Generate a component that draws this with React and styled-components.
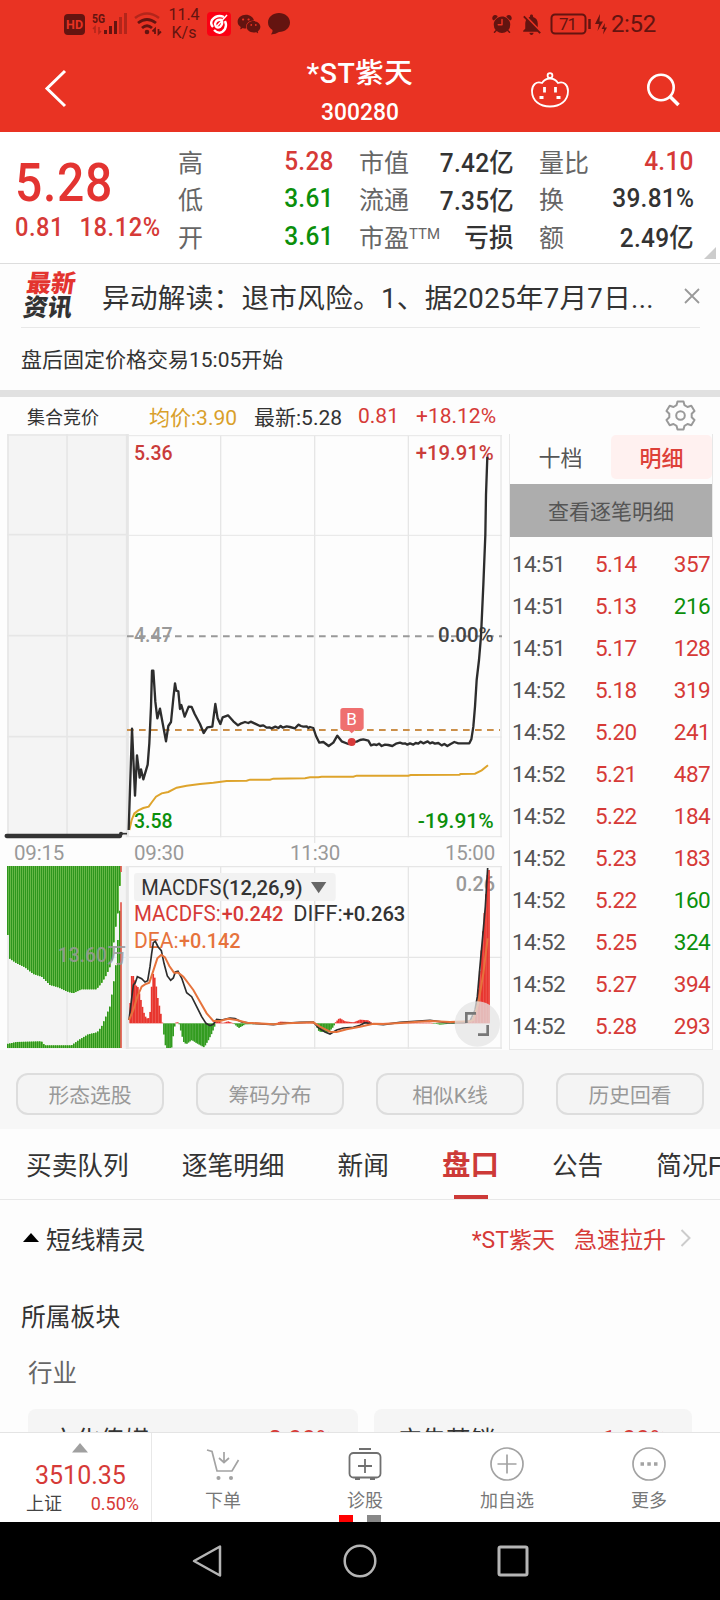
import styled, { createGlobalStyle } from 'styled-components';
import { AiFillWechat } from 'react-icons/ai';
import { IoAlarm } from 'react-icons/io5';
import { MdNotificationsOff } from 'react-icons/md';

const RED = '#d63a37';
const GREEN = '#0b8f0b';
const maroon = '#641410';

const GlobalStyle = createGlobalStyle`
  * {
    box-sizing: border-box;
  }

  body {
    margin: 0;
    background: #fdfdfd;
    color: #333;
    font-family: Roboto, "Noto Sans CJK SC", sans-serif;
  }

  svg {
    display: block;
    flex-shrink: 0;
  }
`;

const Screen = styled.main`
  width: 720px;
  height: 1600px;
  overflow: hidden;
  display: flex;
  flex-direction: column;

  > * {
    flex-shrink: 0;
  }
`;

/* ---------- header ---------- */

const Header = styled.header`
  height: 132px;
  background: #e93323;
  color: #fff;
`;

const StatusBar = styled.div`
  height: 48px;
  padding: 0 64px;
  display: flex;
  align-items: center;
  color: ${maroon};
`;

const Speed = styled.div`
  width: 36px;
  margin: 0 5px 0 4px;
  font-size: 16px;
  line-height: 18px;
  text-align: center;
`;

const StatusRight = styled.div`
  margin-left: auto;
  display: flex;
  align-items: center;
`;

const Clock = styled.span`
  margin-left: 3px;
  font-size: 24px;
  letter-spacing: -0.3px;
`;

const TitleBar = styled.div`
  height: 84px;
  display: grid;
  grid-template-columns: 1fr 160px 1fr;
`;

const BackSlot = styled.div`
  padding: 21px 0 0 44px;
`;

const Title = styled.h1`
  margin: 7px 0 0;
  font-size: 28.5px;
  line-height: 38px;
  font-weight: 500;
  letter-spacing: 0.5px;
  text-align: center;

  small {
    display: block;
    margin-top: 4px;
    font-size: 24px;
    line-height: 30px;
    letter-spacing: 0;
    transform: scaleX(0.95);
  }
`;

const HeaderActions = styled.div`
  display: flex;
  justify-content: space-between;
  padding: 23px 40px 0 90px;
`;

/* ---------- quote ---------- */

const Quote = styled.section`
  position: relative;
  height: 132px;
  padding: 10px 25px 0 15px;
  display: flex;
  background: #fff;
  border-bottom: 1px solid #ddd;
`;

const PriceBlock = styled.div`
  width: 163px;
  color: ${RED};
`;

const Price = styled.div`
  margin-top: 10px;
  font-size: 54px;
  line-height: 61px;
  font-weight: 500;
  letter-spacing: 0.8px;
  color: #e33431;
  transform: scaleX(0.89);
  transform-origin: left;
`;

const Change = styled.div`
  display: flex;
  gap: 17px;
  font-size: 26px;
  line-height: 29px;
  font-weight: 500;
  letter-spacing: 0.6px;
  white-space: nowrap;
  transform: scaleX(0.91);
  transform-origin: left;
`;

const Stats = styled.dl`
  margin: 0;
  flex: 1;
  display: grid;
  grid-template-columns: 156px 155px 155px;
  column-gap: 25px;
  grid-auto-rows: 37.5px;
`;

const Stat = styled.div`
  display: flex;
  justify-content: space-between;
  align-items: center;

  dt {
    font-size: 25px;
    color: #666;
  }

  sup {
    font-size: 15px;
    line-height: 1;
    vertical-align: 8px;
  }

  dd {
    margin: 0;
    font-size: 26px;
    font-weight: 500;
    letter-spacing: 0.3px;
    color: ${(p) => p.$color || '#333'};
    transform: scaleX(0.94);
    transform-origin: right;
  }
`;

const Corner = styled.i`
  position: absolute;
  right: 4px;
  bottom: 4px;
  border-left: 12px solid transparent;
  border-bottom: 12px solid #ccc;
`;

/* ---------- news ---------- */

const News = styled.section`
  height: 64px;
  margin: 0 20px 0 21px;
  display: flex;
  align-items: center;
  border-bottom: 1px solid #e8e8e8;
`;

const NewsLogo = styled.div`
  width: 54px;
  margin-left: 4px;
  margin-right: 23px;
  font-size: 24.5px;
  line-height: 24px;
  font-weight: 900;
  transform: skewX(-8deg);

  b {
    display: block;
    font-weight: 900;
    color: #e3342f;
  }
`;

const Headline = styled.p`
  flex: 1;
  margin: 0;
  font-size: 27.6px;
  letter-spacing: 0.3px;
  white-space: nowrap;
`;

const Notice = styled.p`
  height: 69px;
  margin: 0;
  padding: 0 21px;
  line-height: 64px;
  font-size: 21px;
  border-bottom: 7px solid #e1e1e1;
`;

/* ---------- chart ---------- */

const ChartHead = styled.div`
  height: 37px;
  padding: 0 24px 0 27px;
  display: flex;
  align-items: center;
  font-size: 21px;
  color: ${RED};
`;

const Auction = styled.span`
  width: 122px;
  font-size: 18px;
  color: #333;
`;

const HeadValue = styled.span`
  width: ${(p) => p.$w}px;
  color: ${(p) => p.$color};
  white-space: nowrap;
`;

const GearSlot = styled.span`
  margin-left: auto;
`;

const Board = styled.section`
  height: 616px;
  display: flex;
  background: #fdfdfd;
`;

const Charts = styled.div`
  width: 509px;
`;

const TimeAxis = styled.div`
  width: 509px;
  height: 23px;
  padding: 0 14px 0 14px;
  display: grid;
  grid-template-columns: 120px 156px 1fr auto;
  font-size: 20.5px;
  letter-spacing: -0.2px;
  line-height: 21px;
  color: #999;
`;

const Ticks = styled.div`
  width: 204px;
  border: 1px solid #e8e8e8;
  border-top: 0;
`;

const TickTabs = styled.div`
  height: 50px;
  padding-top: 1px;
  display: grid;
  grid-template-columns: 1fr 1fr;
`;

const TickTab = styled.div`
  height: 44px;
  line-height: 47px;
  text-align: center;
  font-size: 22px;
  border-radius: 5px;
  font-weight: ${(p) => (p.$active ? 500 : 400)};
  color: ${(p) => (p.$active ? '#dd4038' : '#555')};
  background: ${(p) => (p.$active ? '#fff1f0' : 'transparent')};
`;

const DetailBar = styled.div`
  height: 53px;
  margin-bottom: 6px;
  line-height: 56px;
  text-align: center;
  font-size: 21px;
  color: #555;
  background: #adadad;
`;

const TickRow = styled.div`
  height: 42px;
  padding: 0 2px 0 2px;
  display: grid;
  grid-template-columns: 83px 1fr auto;
  align-items: center;
  font-size: 22.5px;
  letter-spacing: -0.6px;
  color: ${RED};

  span:first-child {
    color: #555;
  }

  span:last-child {
    color: ${(p) => (p.$sell ? GREEN : RED)};
  }
`;

/* ---------- lower part ---------- */

const Tools = styled.div`
  height: 79px;
  padding: 23px 16px 0;
  display: flex;
  justify-content: space-between;
  background: #f7f7f7;
`;

const ToolButton = styled.button`
  width: 148px;
  height: 42px;
  padding: 0;
  border: 2px solid #ddd;
  border-radius: 12px;
  background: #f4f4f4;
  color: #999;
  font: inherit;
  font-size: 20.8px;
`;

const Tabs = styled.nav`
  height: 71px;
  padding-left: 26px;
  display: flex;
  gap: 53px;
  border-bottom: 1px solid #e8e8e8;
  white-space: nowrap;
  overflow: hidden;
`;

const Tab = styled.a`
  position: relative;
  line-height: ${(p) => (p.$active ? 74 : 75)}px;
  font-size: ${(p) => (p.$active ? 28.5 : 25.7)}px;
  font-weight: ${(p) => (p.$active ? 700 : 400)};
  color: ${(p) => (p.$active ? '#cd3a38' : '#333')};

  &::after {
    content: '';
    display: ${(p) => (p.$active ? 'block' : 'none')};
    position: absolute;
    left: calc(50% - 16px);
    bottom: 0;
    width: 34px;
    height: 4px;
    background: #cd3a38;
  }
`;

const Alert = styled.div`
  height: 78px;
  padding: 0 28px 2px 23px;
  display: flex;
  align-items: center;
  gap: 7px;
  font-size: 24.8px;
`;

const AlertLink = styled.span`
  margin-left: auto;
  display: flex;
  align-items: center;
  gap: 19px;
  font-size: 23px;
  color: ${RED};

  svg {
    margin-left: -5px;
  }
`;

const SectionTitle = styled.h2`
  height: 78px;
  margin: 0;
  padding-left: 21px;
  line-height: 80px;
  font-size: 24.8px;
  font-weight: 400;
`;

const GroupTitle = styled.h3`
  height: 53px;
  margin: 0;
  padding-left: 28px;
  line-height: 36px;
  font-size: 24.5px;
  font-weight: 400;
  color: #666;
`;

const Cards = styled.div`
  height: 23px;
  overflow: hidden;
  padding: 0 28px;
  display: grid;
  grid-template-columns: 330px 318px;
  gap: 16px;
`;

const Card = styled.div`
  height: 80px;
  padding: 15px 24px 0 23px;
  display: flex;
  justify-content: space-between;
  background: #f5f5f5;
  border-radius: 8px;
  font-size: 24.5px;
  line-height: 34px;

  span {
    margin-top: -2px;
    color: ${RED};
  }
`;

const BottomBar = styled.footer`
  height: 90px;
  display: flex;
  background: #fff;
  border-top: 1px solid #e4e4e4;
`;

const Index = styled.div`
  width: 152px;
  padding: 10px 12px 0 26px;
  border-right: 1px solid #e8e8e8;
  color: ${RED};

  svg {
    margin-left: 46px;
  }
`;

const IndexValue = styled.div`
  margin: 6px 0 0 9px;
  font-size: 25px;
  line-height: 33px;
`;

const IndexChange = styled.div`
  display: flex;
  justify-content: space-between;
  font-size: 18px;
  line-height: 24px;

  b {
    color: #444;
    font-weight: 400;
  }
`;

const Action = styled.div`
  position: relative;
  flex: 1;
  padding-top: 14px;
  display: flex;
  flex-direction: column;
  align-items: center;
  font-size: 18px;
  line-height: 28px;
  color: #777;

  svg {
    margin-bottom: 6px;
  }
`;

const PagerDots = styled.span`
  position: absolute;
  bottom: 0;
  left: 45px;
  display: flex;
  gap: 14px;

  i {
    width: 14px;
    height: 7px;
    background: #888;
  }

  i:first-child {
    background: #f00;
  }
`;

const SystemNav = styled.div`
  height: 78px;
  padding-right: 1px;
  background: #000;
  display: flex;
  justify-content: center;
  align-items: center;
  gap: 120px;
`;

/* ---------- data ---------- */

const stats = [
  ['高', '5.28', RED],
  ['市值', '7.42亿'],
  ['量比', '4.10', RED],
  ['低', '3.61', GREEN],
  ['流通', '7.35亿'],
  ['换', '39.81%'],
  ['开', '3.61', GREEN],
  ['市盈', '亏损'],
  ['额', '2.49亿'],
];

const ticks = [
  ['14:51', '5.14', 357],
  ['14:51', '5.13', 216, true],
  ['14:51', '5.17', 128],
  ['14:52', '5.18', 319],
  ['14:52', '5.20', 241],
  ['14:52', '5.21', 487],
  ['14:52', '5.22', 184],
  ['14:52', '5.23', 183],
  ['14:52', '5.22', 160, true],
  ['14:52', '5.25', 324, true],
  ['14:52', '5.27', 394],
  ['14:52', '5.28', 293],
];

const tools = ['形态选股', '筹码分布', '相似K线', '历史回看'];
const tabs = ['买卖队列', '逐笔明细', '新闻', '盘口', '公告', '简况F10'];

const priceLine =
  '386,600 396,296 405,497 411,376 419,443 423,418 430,448 443,404 448,340 453,230 456,122 460,122 466,215 472,265 480,236 488,280 498,334 505,288 513,276 520,205 525,160 529,182 535,184 540,237 544,225 554,260 566,230 575,231 584,252 600,282 611,309 622,292 637,290 646,222 653,265 661,282 668,262 684,256 700,274 714,286 724,280 735,276 745,279 752,275 765,281 780,288 790,286 800,293 808,292 815,295 826,290 835,294 842,288 848,293 860,289 870,291 885,295 895,284 903,288 910,290 920,289 925,294 930,291 940,294 948,318 958,338 970,336 986,348 1000,338 1012,317 1025,334 1045,342 1055,337 1070,335 1080,330 1090,328 1105,332 1113,346 1122,343 1130,345 1137,341 1145,348 1155,344 1165,345 1177,348 1188,341 1200,338 1208,341 1215,340 1222,344 1230,340 1240,344 1247,339 1255,341 1262,335 1270,340 1283,334 1290,340 1297,337 1305,341 1315,339 1325,346 1333,342 1342,348 1352,342 1363,336 1375,340 1408,340 1414,328 1420,290 1425,230 1430,150 1437,90 1443,19 1450,-135 1456,-285 1458,-405 1462,-520';

const averageLine =
  '388,600 395,570 403,550 415,541 430,534 446,530 456,516 468,500 485,490 505,486 530,473 560,467 600,462 640,458 680,453 740,452 750,449 810,449 820,446 915,445 930,442 955,442 965,440 1060,440 1070,437 1225,437 1232,435 1378,434 1382,432 1425,431 1445,421 1464,406';

const diffLine =
  '387,510 392,470 400,405 406,398 412,380 425,386 435,396 443,392 450,350 455,310 460,278 466,274 474,290 484,302 492,340 502,378 512,391 520,384 526,366 534,364 545,384 560,428 575,440 590,470 605,500 618,520 630,527 640,523 650,508 665,510 690,504 705,506 725,516 760,520 820,524 850,520 900,517 940,516 955,533 975,546 990,552 1010,540 1030,534 1060,532 1080,526 1095,518 1120,522 1150,524 1200,517 1290,511 1340,518 1395,518 1410,513 1425,480 1432,440 1438,370 1448,260 1456,170 1463,54';

const deaLine =
  '387,510 400,480 412,440 425,410 435,403 448,398 460,362 472,325 484,314 495,322 508,348 522,368 535,368 550,380 580,420 600,455 620,490 640,513 660,513 685,506 710,510 740,518 820,523 860,520 940,517 960,530 990,545 1010,546 1040,538 1080,530 1120,521 1150,522 1200,519 1290,513 1350,516 1410,514 1420,510 1435,460 1450,370 1463,265';

const auctionTop = [[22, 220], [28, 325], [50, 340], [75, 352], [100, 372], [125, 380], [150, 405], [175, 412], [200, 424], [220, 430], [245, 418], [290, 418], [305, 400], [320, 375], [335, 340], [345, 250], [357, 170], [362, 66]];
const auctionBottom = [[22, 582], [50, 576], [125, 574], [135, 586], [215, 586], [240, 568], [265, 553], [292, 547], [305, 530], [318, 500], [330, 470], [340, 410], [350, 330], [358, 210], [362, 155]];
const histogram = [[387, 520], [394, 378], [402, 378], [406, 407], [412, 407], [420, 440], [430, 485], [438, 505], [445, 505], [450, 485], [455, 400], [460, 365], [467, 400], [472, 440], [480, 480], [487, 520], [492, 560], [497, 594], [514, 594], [520, 550], [525, 520], [531, 515], [537, 522], [550, 575], [558, 583], [575, 570], [590, 580], [612, 592], [625, 570], [635, 550], [643, 530], [646, 512], [668, 519], [684, 514], [700, 520], [716, 534], [735, 523], [825, 521], [840, 515], [930, 518], [945, 521], [957, 545], [985, 547], [1000, 530], [1006, 517], [1018, 504], [1035, 514], [1060, 517], [1080, 509], [1105, 511], [1115, 519], [1290, 518], [1320, 524], [1350, 521], [1405, 518], [1420, 500], [1430, 460], [1436, 400], [1445, 280], [1455, 160], [1463, 60]];

function valueAt(points, x) {
  const i = points.findIndex((p) => p[0] >= x);
  if (i <= 0) return points[i === 0 ? 0 : points.length - 1][1];
  const [x0, y0] = points[i - 1];
  const [x1, y1] = points[i];
  return y0 + ((y1 - y0) * (x - x0)) / (x1 - x0);
}

function range(start, end, step) {
  const out = [];
  for (let x = start; x < end; x += step) out.push(x);
  return out;
}

const ChartText = styled.text`
  font-family: Roboto, "Noto Sans CJK SC", sans-serif;
  font-size: ${(p) => p.$size || 63}px;
  font-weight: ${(p) => p.$weight || 500};
  fill: ${(p) => p.$color};
`;

// x, width and baseline are in chart units (three to a pixel)
function Label({ x, y, w, color, children, ...rest }) {
  return (
    <ChartText x={x} y={y} textLength={w} lengthAdjust="spacingAndGlyphs" $color={color} {...rest}>
      {children}
    </ChartText>
  );
}

function PriceChart() {
  return (
    <svg width="509" height="409" viewBox="0 -588 1527 1227">
      <rect x="22" y="-588" width="364" height="1208" fill="#f4f4f4" />
      <g stroke="#e6e6e6" strokeWidth="5">
        <path d="M22-585H380M22-286H380M22 17H380M22 320H380" />
        <path d="M24-588V620M201-588V620" />
        <path d="M382-588V622" strokeWidth="9" />
        <path d="M386-583H1506M386-284H1506M386 321H1506M386 620H1506" strokeWidth="3" />
        <path d="M662-583V622M944-583V639M1225-583V622M1503-583V622" strokeWidth="4" />
      </g>
      <path d="M381 19H1506" stroke="#999" strokeWidth="6" strokeDasharray="20 16" />
      <path d="M381 300H1500" stroke="#cb8f49" strokeWidth="6" strokeDasharray="20 16" />
      <Label x="402" y="-511" w="116" color="#ca3c3a">5.36</Label>
      <Label x="1247" y="-511" w="234" color="#ca3c3a">+19.91%</Label>
      <Label x="402" y="36" w="116" color="#999">4.47</Label>
      <Label x="1314" y="36" w="167" color="#444">0.00%</Label>
      <Label x="402" y="594" w="116" color={GREEN}>3.58</Label>
      <Label x="1253" y="594" w="228" color={GREEN}>-19.91%</Label>
      <polyline points={averageLine} fill="none" stroke="#dea42c" strokeWidth="6" />
      <path d="M20 618H360" stroke="#333" strokeWidth="13" strokeLinecap="round" />
      <circle cx="363" cy="611" r="6" fill="#333" />
      <path d="M363 611H381" stroke="#333" strokeWidth="5" />
      <polyline points={priceLine} fill="none" stroke="#2d2d2d" strokeWidth="7" strokeLinejoin="round" />
      <rect x="1021" y="234" width="70" height="66" rx="8" fill="#ef6f6f" />
      <path d="M1044 299H1067L1055 310Z" fill="#ef6f6f" />
      <ChartText x="1039" y="286" $size={51} $weight={400} $color="#fff">B</ChartText>
      <circle cx="1055" cy="336" r="12" fill="#d83b3b" />
    </svg>
  );
}

function MacdChart() {
  return (
    <svg width="509" height="184" viewBox="0 48 1527 552">
      <rect x="22" y="48" width="364" height="549" fill="#f4f4f4" />
      <g stroke="#e6e6e6" strokeWidth="4">
        <path d="M24 48V595M201 48V595M22 322H380" />
        <path d="M382 48V597" strokeWidth="9" />
        <path d="M386 50H1506M386 322H1506M386 594H1506" />
        <path d="M662 48V597M944 48V597M1225 48V597M1503 48V597" />
      </g>
      {range(21, 360, 6).map((x) => (
        <g key={x} fill="#2d961d">
          <rect x={x} y="48" width="6" height={valueAt(auctionTop, x + 3) - 48} fill="#66b747" />
          <rect x={x} y="48" width="3" height={valueAt(auctionTop, x + 3) - 48} />
          <rect x={x} y={valueAt(auctionBottom, x + 3)} width="6" height={594 - valueAt(auctionBottom, x + 3)} fill="#66b747" />
          <rect x={x} y={valueAt(auctionBottom, x + 3)} width="3" height={594 - valueAt(auctionBottom, x + 3)} />
        </g>
      ))}
      <path d="M363 48V66M363 157V594" stroke="#e2574c" strokeWidth="5" />
      <Label x="173" y="336" w="206" color="#999" fillOpacity="0.85">13.60万</Label>

      <rect x="402" y="69" width="605" height="84" rx="10" fill="#f2f2f2" />
      <Label x="424" y="134" w="240" color="#333" $size={66} $weight={400}>MACDFS</Label>
      <Label x="666" y="134" w="242" color="#333">(12,26,9)</Label>
      <path d="M933 96H979L956 130Z" fill="#666" />
      <Label x="402" y="213" w="260" color="#d63a37" $size={66} $weight={400}>MACDFS:</Label>
      <Label x="665" y="213" w="185" color="#d63a37">+0.242</Label>
      <Label x="880" y="213" w="148" color="#333" $size={66} $weight={400}>DIFF:</Label>
      <Label x="1028" y="213" w="188" color="#333">+0.263</Label>
      <Label x="402" y="294" w="134" color="#e6733c" $size={66} $weight={400}>DEA:</Label>
      <Label x="537" y="294" w="185" color="#e6733c">+0.142</Label>
      <Label x="1367" y="124" w="118" color="#999">0.26</Label>

      {range(388, 1466, 4.6).map((x) => {
        const y = valueAt(histogram, x + 2);
        return (
          <rect
            key={x}
            x={x}
            y={Math.min(y, 520)}
            width="5.2"
            height={Math.max(1.5, Math.abs(520 - y))}
            fill={y < 520 ? '#e8362f' : '#339c20'}
          />
        );
      })}
      <polyline points={diffLine} fill="none" stroke="#2d2d2d" strokeWidth="5" />
      <polyline points={deaLine} fill="none" stroke="#e6733c" strokeWidth="6" />

      <circle cx="1432" cy="522" r="68" fill="#e4e4e4" fillOpacity="0.75" />
      <path d="M1399 519V490H1428M1463 525V554H1434" fill="none" stroke="#777" strokeWidth="8" />
    </svg>
  );
}

function StatusIcons() {
  return (
    <>
      <svg width="21" height="21" viewBox="0 0 21 21">
        <rect width="21" height="21" rx="4" fill={maroon} />
        <text x="2" y="15" fontSize="12.5" fontWeight="700" textLength="17" fontFamily="Roboto" fill="#e93323">HD</text>
      </svg>
      <svg width="36" height="24" viewBox="0 0 36 24" style={{ marginLeft: 7 }}>
        <text x="0" y="10.5" fontSize="12.5" fontWeight="700" textLength="13" lengthAdjust="spacingAndGlyphs" fontFamily="Roboto" fill={maroon}>5G</text>
        <path d="M3 21V15L1 17M7 15V21L9 19" fill="none" stroke="#b3261b" strokeWidth="1.6" />
        <path d="M13.5 22v-4M18.500 22v-8M23.500 22V9" stroke={maroon} strokeWidth="3" />
        <path d="M28.500 22V5M33.500 22V1" stroke="#b3261b" strokeWidth="3" />
      </svg>
      <svg width="28" height="24" viewBox="0 0 28 24" style={{ marginLeft: 6 }}>
        <path d="M1 6Q13 -3 25 6" fill="none" stroke="#b3261b" strokeWidth="2.600" />
        <path d="M4 11Q13 4 22 11M8 16Q13 11.500 18 16" fill="none" stroke={maroon} strokeWidth="2.800" />
        <circle cx="13" cy="20" r="2.300" fill={maroon} />
        <path d="M21 22V17L18.500 19.500M24.500 17V22L27 19.500" fill="none" stroke={maroon} strokeWidth="1.800" />
      </svg>
      <Speed>11.4 K/s</Speed>
      <svg width="24" height="24" viewBox="0 0 24 24">
        <rect width="24" height="24" rx="4" fill="#fb0013" />
        <path d="M17 5Q10 2 5 8Q3 12 6 15M7 18Q13 24 18 17Q20 13 18 9M15 8Q9 7 8 12Q9 17 13 15Q16 12 15 9" fill="none" stroke="#fff" strokeWidth="2.400" />
        <path d="M20 3L10 14" stroke="#fff" strokeWidth="1.500" />
      </svg>
      <AiFillWechat size={26} style={{ margin: '0 0 0 5px' }} />
      <svg width="24" height="22" viewBox="0 0 24 22" style={{ marginLeft: 5 }}>
        <path d="M12 0C18 0 23 4 23 9.500S18 19 12 19Q9 21 4 21.500Q6 19.500 5.500 17Q1 14 1 9.500C1 4 6 0 12 0Z" fill={maroon} />
      </svg>
    </>
  );
}

function GearIcon() {
  return (
    <svg width="31" height="31" viewBox="0 0 31 31" fill="none" stroke="#999" strokeWidth="2" strokeLinejoin="round">
      <path d="M12.500 1.500H18.500L19.500 5.200L22.500 7L26.300 5.800L29.500 11L26.700 13.800V17.200L29.500 20L26.300 25.200L22.500 24L19.500 25.800L18.500 29.500H12.500L11.500 25.800L8.500 24L4.700 25.200L1.500 20L4.300 17.200V13.800L1.500 11L4.700 5.800L8.500 7L11.500 5.200Z" />
      <circle cx="15.500" cy="15.500" r="4.300" />
    </svg>
  );
}

export default function App() {
  return (
    <Screen>
      <GlobalStyle />
      <Header>
        <StatusBar>
          <StatusIcons />
          <StatusRight>
            <IoAlarm size={24} />
            <MdNotificationsOff size={25} style={{ marginLeft: 5 }} />
            <svg width="58" height="22" viewBox="0 0 58 22" style={{ marginLeft: 6 }}>
              <rect x="1.500" y="1.500" width="34" height="19" rx="3.500" fill="none" stroke={maroon} strokeWidth="2" />
              <path d="M39.500 6V16" stroke={maroon} strokeWidth="2.500" />
              <text x="9" y="16.800" fontSize="17" textLength="18" fontFamily="Roboto" fill={maroon}>71</text>
              <path d="M50 1L45 11H49L47.500 18L53 8.500H49.500ZM55 10L51.500 16H54L53 21.500L57 14.500H54.500Z" fill={maroon} />
            </svg>
            <Clock>2:52</Clock>
          </StatusRight>
        </StatusBar>
        <TitleBar>
          <BackSlot>
            <svg width="24" height="40" viewBox="0 0 24 40">
              <path d="M21 2L3 19.500L21 37" fill="none" stroke="#fff" strokeWidth="3" />
            </svg>
          </BackSlot>
          <Title>
            *ST紫天
            <small>300280</small>
          </Title>
          <HeaderActions>
            <svg width="40" height="38" viewBox="0 0 40 38" fill="none" stroke="#fff" strokeWidth="1.800">
              <circle cx="20" cy="4.500" r="2.400" />
              <path d="M12 12Q15 7.500 20 7.500T28 12C34 10 38 14 38 20C38 30 30 35.500 20 35.500S2 30 2 20C2 14 6 10 12 12Z" />
              <path d="M14.500 16V21.500M25.500 16V21.500" strokeWidth="2.800" />
              <path d="M9.500 26.500H13.500M26.500 26.500H30.500" strokeWidth="3" />
            </svg>
            <svg width="34" height="36" viewBox="0 0 34 36" fill="none" stroke="#fff" strokeWidth="2.600">
              <circle cx="15" cy="16.500" r="12.700" />
              <path d="M24 25.500L32.500 34" strokeWidth="3.600" />
            </svg>
          </HeaderActions>
        </TitleBar>
      </Header>

      <Quote>
        <PriceBlock>
          <Price>5.28</Price>
          <Change>
            <span>0.81</span>
            <span>18.12%</span>
          </Change>
        </PriceBlock>
        <Stats>
          {stats.map(([name, value, color]) => (
            <Stat key={name} $color={color}>
              <dt>
                {name}
                {name === '市盈' && <sup>TTM</sup>}
              </dt>
              <dd>{value}</dd>
            </Stat>
          ))}
        </Stats>
        <Corner />
      </Quote>

      <News>
        <NewsLogo>
          <b>最新</b>
          资讯
        </NewsLogo>
        <Headline>异动解读：退市风险。1、据2025年7月7日...</Headline>
        <svg width="16" height="16" viewBox="0 0 16 16">
          <path d="M1 1L15 15M15 1L1 15" stroke="#999" strokeWidth="1.800" />
        </svg>
      </News>
      <Notice>盘后固定价格交易15:05开始</Notice>

      <ChartHead>
        <Auction>集合竞价</Auction>
        <HeadValue $w={105} $color="#d9a02a">均价:3.90</HeadValue>
        <HeadValue $w={104} $color="#333">最新:5.28</HeadValue>
        <HeadValue $w={58}>0.81</HeadValue>
        <HeadValue $w={90}>+18.12%</HeadValue>
        <GearSlot>
          <GearIcon />
        </GearSlot>
      </ChartHead>

      <Board>
        <Charts>
          <PriceChart />
          <TimeAxis>
            <span>09:15</span>
            <span>09:30</span>
            <span>11:30</span>
            <span>15:00</span>
          </TimeAxis>
          <MacdChart />
        </Charts>
        <Ticks>
          <TickTabs>
            <TickTab>十档</TickTab>
            <TickTab $active>明细</TickTab>
          </TickTabs>
          <DetailBar>查看逐笔明细</DetailBar>
          {ticks.map(([time, price, volume, sell], i) => (
            <TickRow key={i} $sell={sell}>
              <span>{time}</span>
              <span>{price}</span>
              <span>{volume}</span>
            </TickRow>
          ))}
        </Ticks>
      </Board>

      <Tools>
        {tools.map((name) => (
          <ToolButton key={name}>{name}</ToolButton>
        ))}
      </Tools>

      <Tabs>
        {tabs.map((name) => (
          <Tab key={name} $active={name === '盘口'}>{name}</Tab>
        ))}
      </Tabs>

      <Alert>
        <svg width="16" height="10" viewBox="0 0 16 10">
          <path d="M8 0L16 9H0Z" />
        </svg>
        短线精灵
        <AlertLink>
          <span>*ST紫天</span>
          <span>急速拉升</span>
          <svg width="12" height="18" viewBox="0 0 12 18">
            <path d="M1.500 1L9.500 9L1.500 17" fill="none" stroke="#ccc" strokeWidth="2" />
          </svg>
        </AlertLink>
      </Alert>
      <SectionTitle>所属板块</SectionTitle>
      <GroupTitle>行业</GroupTitle>
      <Cards>
        <Card>
          文化传媒
          <span>0.99%</span>
        </Card>
        <Card>
          广告营销
          <span>1.99%</span>
        </Card>
      </Cards>

      <BottomBar>
        <Index>
          <svg width="16" height="10" viewBox="0 0 16 10">
            <path d="M8 0L16 9.500H0Z" fill="#a0a0a0" />
          </svg>
          <IndexValue>3510.35</IndexValue>
          <IndexChange>
            <b>上证</b>
            0.50%
          </IndexChange>
        </Index>
        <Action>
          <svg width="34" height="34" viewBox="0 0 34 34" fill="none" stroke="#a3a3a3" strokeWidth="1.700">
            <path d="M1 3L6 4.500L11 24H26L32.500 13M18 5V15M13 11L18 15.500L23 11" />
            <circle cx="12.500" cy="31" r="1.200" fill="#a3a3a3" />
            <circle cx="25" cy="31" r="1.200" fill="#a3a3a3" />
          </svg>
          下单
        </Action>
        <Action>
          <svg width="34" height="34" viewBox="0 0 34 34" fill="none" stroke="#707070" strokeWidth="1.800">
            <path d="M11 2H23M7 32H12M22 32H27M17 12V26M10 19H24" />
            <rect x="1.500" y="6" width="31" height="24.500" rx="4" />
          </svg>
          诊股
          <PagerDots>
            <i />
            <i />
          </PagerDots>
        </Action>
        <Action>
          <svg width="34" height="34" viewBox="0 0 34 34" fill="none" stroke="#a3a3a3" strokeWidth="1.700">
            <circle cx="17" cy="17" r="16" />
            <path d="M17 7.500V26.500M7.500 17H26.500" />
          </svg>
          加自选
        </Action>
        <Action>
          <svg width="34" height="34" viewBox="0 0 34 34" fill="none" stroke="#a3a3a3" strokeWidth="1.700">
            <circle cx="17" cy="17" r="16" />
            <path d="M8.500 17H12M15.300 17H18.800M22 17H25.500" strokeWidth="3.500" />
          </svg>
          更多
        </Action>
      </BottomBar>

      <SystemNav>
        <svg width="32" height="34" viewBox="0 0 32 34">
          <path d="M29 2.500V31.500L3 17Z" fill="none" stroke="#b5b5b5" strokeWidth="2.500" strokeLinejoin="round" />
        </svg>
        <svg width="34" height="34" viewBox="0 0 34 34">
          <circle cx="17" cy="17" r="15.300" fill="none" stroke="#b5b5b5" strokeWidth="2.500" />
        </svg>
        <svg width="32" height="32" viewBox="0 0 32 32">
          <rect x="2" y="2" width="28" height="28" rx="1.500" fill="none" stroke="#b5b5b5" strokeWidth="3" />
        </svg>
      </SystemNav>
    </Screen>
  );
}
